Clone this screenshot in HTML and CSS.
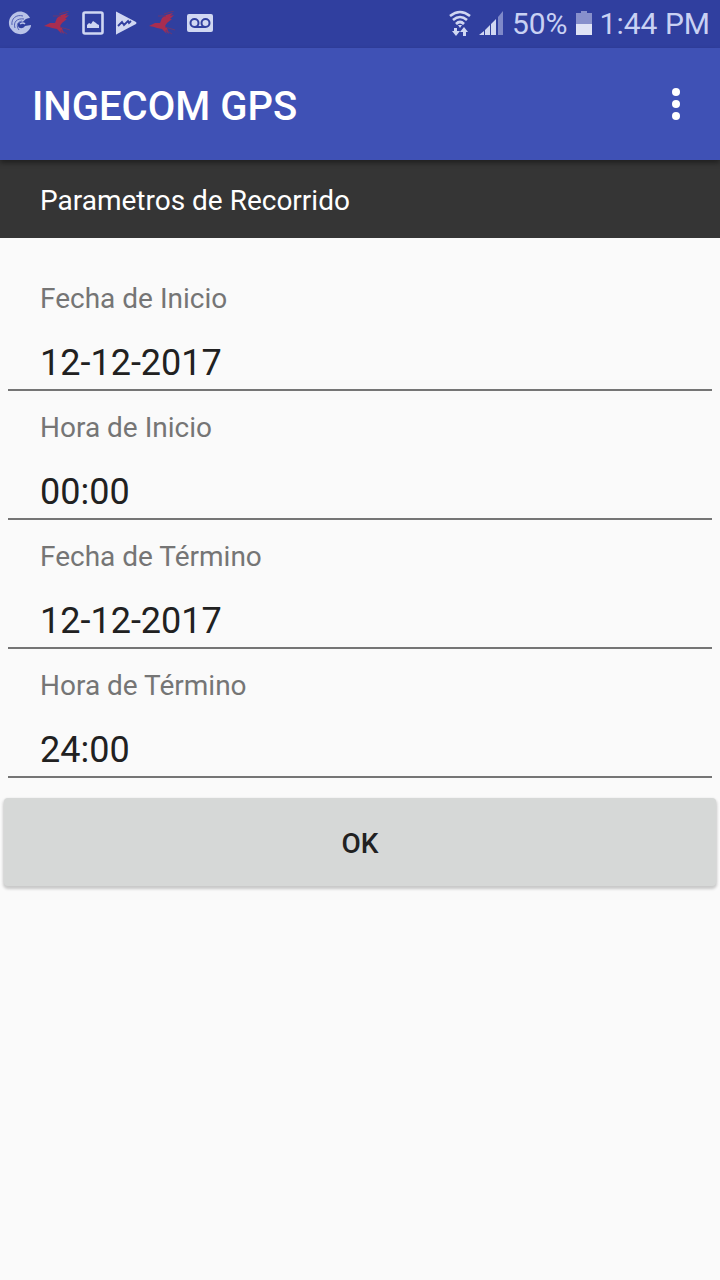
FILE: index.html
```html
<!DOCTYPE html>
<html lang="es">
<head>
    <meta charset="UTF-8">
    <meta name="viewport" content="width=device-width, initial-scale=1.0">
    <title>INGECOM GPS</title>
    <link rel="stylesheet" href="styles.css">
</head>
<body>
    <svg class="symbols" aria-hidden="true">
        <symbol id="bird" viewBox="0 0 28 24">
            <path d="M1 15l6-3 5 0 2-5 4-3 7-2-3 3 4-1-4 4 2 0-5 4-2 3 2 2 2 6-4-4 2 4-5-5-5-1-3-1z"/>
            <path d="M10 5l8 0M16 3l10-3M17 16l10 3M18 19l6 4" fill="none" stroke="#6b3770" stroke-width="1"/>
        </symbol>
    </svg>

    <div class="status-bar">
        <div class="notifications">
            <svg width="24" height="24" viewBox="0 0 24 24">
                <path d="M22 7C19 1 12-1 7 2 1 5-1 13 3 18c4 6 12 7 17 2 2-2 3-4 3-6l-6 1c-2 3-6 3-7 0-1-2 0-4 3-4 4 0 3-4 9-4z" fill="#b9c3e8"/>
                <path d="M4 14C3 8 8 3 15 5M7 17C5 11 9 7 16 8M11 19c-3-4-2-8 3-9" fill="none" stroke="#5261b5" stroke-width="1"/>
                <path d="M12 13q3-2 5 0" fill="none" stroke="#b9c3e8" stroke-width="1.5"/>
            </svg>
            <svg class="icon-bird" width="28" height="24"><use href="#bird"/></svg>
            <svg width="22" height="24" viewBox="0 0 22 24">
                <rect x="1.5" y="1.5" width="19" height="21" rx="1.5" fill="none" stroke="#d0d7f2" stroke-width="2.6"/>
                <path d="M5 17v-3l2-2 2 1 2-3 3 2 1 1 2 1v3z" fill="#d0d7f2"/>
            </svg>
            <svg width="22" height="24" viewBox="0 0 22 24">
                <path d="M1 1q0-1 1 0l19 10q1 1 0 2L2 23q-1 1-1 0z" fill="#d0d7f2"/>
                <path d="M3 15l4-4 2 3 4-4 1 2 2-2" fill="none" stroke="#303f9f" stroke-width="1.8"/>
            </svg>
            <svg class="icon-bird" width="28" height="24"><use href="#bird"/></svg>
            <svg width="26" height="24" viewBox="0 0 26 24">
                <rect y="3" width="26" height="18" rx="2" fill="#d0d7f2"/>
                <g fill="none" stroke="#303f9f" stroke-width="2">
                    <circle cx="7.5" cy="12" r="4"/>
                    <circle cx="18.5" cy="12" r="4"/>
                    <path d="M7.500 16h11"/>
                </g>
            </svg>
        </div>
        <div class="system">
            <svg width="22" height="26" viewBox="0 0 22 26">
                <g fill="none" stroke="#d0d7f2" stroke-width="2.6">
                    <path d="M1 6q10-8 20 0M4 10q7-6 14 0M7 14q4-4 8 0"/>
                </g>
                <path d="M9 15h4l-2 3zM5 18h3v3h3l-4 5-4-5h2zM14 26h3v-4h2l-4-5-4 5h3z" fill="#d0d7f2"/>
            </svg>
            <svg width="25" height="24" viewBox="0 0 25 24">
                <path d="M0 24l5-4v4zM6 19l5-5v10H6zM12 13l5-5v16h-5z" fill="#d0d7f2"/>
                <path d="M19 6l5-6v24h-5z" fill="#7f89c9"/>
            </svg>
            <span class="percent">50%</span>
            <svg width="16" height="24" viewBox="0 0 16 24">
                <path d="M0 2h5V0h6v2h5v11H0z" fill="#8790cc"/>
                <path d="M0 13h16v11H0z" fill="#dfe3f5"/>
            </svg>
            <span class="clock">1:44 PM</span>
        </div>
    </div>

    <header class="app-bar">
        <h1>INGECOM GPS</h1>
        <button type="button" class="menu-button" aria-label="Menú">
            <svg width="8" height="32" viewBox="0 0 8 32" fill="#fff">
                <circle cx="4" cy="4" r="4"/>
                <circle cx="4" cy="16" r="4"/>
                <circle cx="4" cy="28" r="4"/>
            </svg>
        </button>
    </header>

    <main>
        <h2>Parametros de Recorrido</h2>
        <form>
            <div class="field">
                <label for="fechaInicio">Fecha de Inicio</label>
                <input type="text" id="fechaInicio" value="12-12-2017">
            </div>
            <div class="field">
                <label for="horaInicio">Hora de Inicio</label>
                <input type="text" id="horaInicio" value="00:00">
            </div>
            <div class="field">
                <label for="fechaTermino">Fecha de Término</label>
                <input type="text" id="fechaTermino" value="12-12-2017">
            </div>
            <div class="field">
                <label for="horaTermino">Hora de Término</label>
                <input type="text" id="horaTermino" value="24:00">
            </div>
            <button type="button" class="ok-button">OK</button>
        </form>
    </main>
</body>
</html>
```
FILE: styles.css
```css
* {
    box-sizing: border-box;
}
body {
    margin: 0;
    background-color: #fafafa;
    color: #212121;
    font-family: Roboto, sans-serif;
}
svg {
    display: block;
    flex: none;
}
.symbols {
    display: none;
}

/* status bar */
.status-bar {
    display: flex;
    justify-content: space-between;
    align-items: center;
    height: 48px;
    padding: 0 10px 2px 8px;
    background-color: #303f9f;
    color: #c9d1f3;
    font-size: 30px;
}
.notifications {
    display: flex;
    align-items: center;
    gap: 11px;
}
.icon-bird {
    fill: #a82d50;
}
.system {
    display: flex;
    align-items: center;
    gap: 8px;
}

/* toolbar */
.app-bar {
    position: relative;
    display: flex;
    justify-content: space-between;
    align-items: center;
    height: 112px;
    padding: 0 20px 0 32px;
    background-color: #3f51b5;
    box-shadow: 0 3px 5px rgba(0, 0, 0, 0.4);
}
h1 {
    margin: 0;
    padding-top: 6px;
    color: #fff;
    font-size: 40px;
    font-weight: 500;
    line-height: 48px;
}
.menu-button {
    display: flex;
    justify-content: center;
    align-items: center;
    width: 48px;
    height: 64px;
    padding: 0;
    border: none;
    background: none;
}
h2 {
    margin: 0;
    padding: 22px 40px 18px;
    background-color: #353535;
    color: #fff;
    font-size: 28px;
    font-weight: 400;
    line-height: 38px;
}

/* form */
form {
    padding-top: 24px;
}
.field {
    padding: 18px 8px 0;
}
label {
    display: block;
    padding-left: 32px;
    color: #757575;
    font-size: 28px;
    line-height: 38px;
}
input {
    display: block;
    width: 100%;
    height: 73px;
    padding: 24px 32px 5px;
    border: none;
    border-bottom: 2px solid #757575;
    background: none;
    color: #212121;
    font-family: inherit;
    font-size: 36px;
    outline: none;
}
.ok-button {
    display: block;
    width: calc(100% - 8px);
    height: 88px;
    margin: 20px 4px;
    padding: 2px 0 0;
    border: none;
    border-radius: 4px;
    background-color: #d6d8d7;
    box-shadow: 0 2px 3px 1px rgba(0, 0, 0, 0.2);
    color: #212121;
    font-family: inherit;
    font-size: 28px;
    font-weight: 500;
}
```
